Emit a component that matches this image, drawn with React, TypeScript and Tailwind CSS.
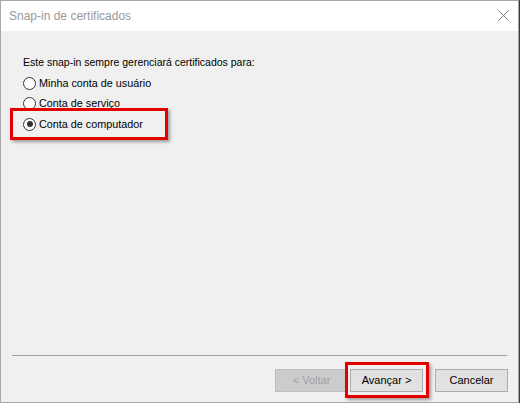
import React from 'react';

const font = { fontFamily: '"Liberation Sans", Arial, sans-serif' };

function Radio({ label, checked }: { label: string; checked?: boolean }) {
  return (
    <div className="flex items-center h-[20.5px] gap-[3px]">
      <span className="w-[13px] h-[13px] rounded-full border border-[#333] bg-white flex items-center justify-center">
        {checked && <span className="w-[6px] h-[6px] rounded-full bg-[#333]" />}
      </span>
      <span className="text-[10.8px] text-black leading-none">{label}</span>
    </div>
  );
}

export default function App() {
  return (
    <div className="w-[520px] h-[403px] bg-[#3a3a3a] relative" style={font}>
      <div className="w-[519px] h-[403px] border border-[#a8a8a8] bg-[#f0f0f0] flex flex-col">
        {/* title bar */}
        <div className="h-[30px] bg-white flex items-center justify-between pl-[8px] pr-[9px]">
          <span className="text-[12px] text-[#999]">Snap-in de certificados</span>
          <svg width="11" height="11" viewBox="0 0 11 11" className="mb-[1px]">
            <path d="M0.5 0.5 L10.5 10.5 M10.5 0.5 L0.5 10.5" stroke="#7a7a7a" strokeWidth="1" />
          </svg>
        </div>

        {/* body */}
        <div className="flex-1 flex flex-col">
          <div className="pl-[22px] pt-[24px]">
            <p className="text-[10.5px] leading-[14px] text-black">Este snap-in sempre gerenciará certificados para:</p>
            <div className="mt-[4px] flex flex-col">
              <Radio label="Minha conta de usuário" />
              <Radio label="Conta de serviço" />
              <Radio label="Conta de computador" checked />
            </div>
          </div>

          <div className="mt-auto">
            <div className="mx-[11px] h-[1px] bg-[#a0a0a0]" />
            <div className="flex justify-end items-center pr-[10px] pt-[13px] pb-[10px] text-[11px]">
              <button className="w-[73px] h-[23px] bg-[#cccccc] border border-[#bfbfbf] text-[#a0a0a0]">&lt; Voltar</button>
              <button className="ml-[2px] w-[73px] h-[23px] bg-[#e1e1e1] border border-[#adadad] text-black">Avançar &gt;</button>
              <button className="ml-[12px] w-[73px] h-[23px] bg-[#e1e1e1] border border-[#adadad] text-black">Cancelar</button>
            </div>
          </div>
        </div>
      </div>

      {/* red annotation boxes */}
      <div className="absolute left-[10px] top-[108px] w-[158px] h-[32px] border-[3px] border-[#e50000] shadow-[2px_2px_3px_rgba(0,0,0,0.35)]" />
      <div className="absolute left-[345px] top-[362px] w-[84px] h-[36px] border-[3px] border-[#e50000] shadow-[2px_2px_3px_rgba(0,0,0,0.35)]" />
    </div>
  );
}
